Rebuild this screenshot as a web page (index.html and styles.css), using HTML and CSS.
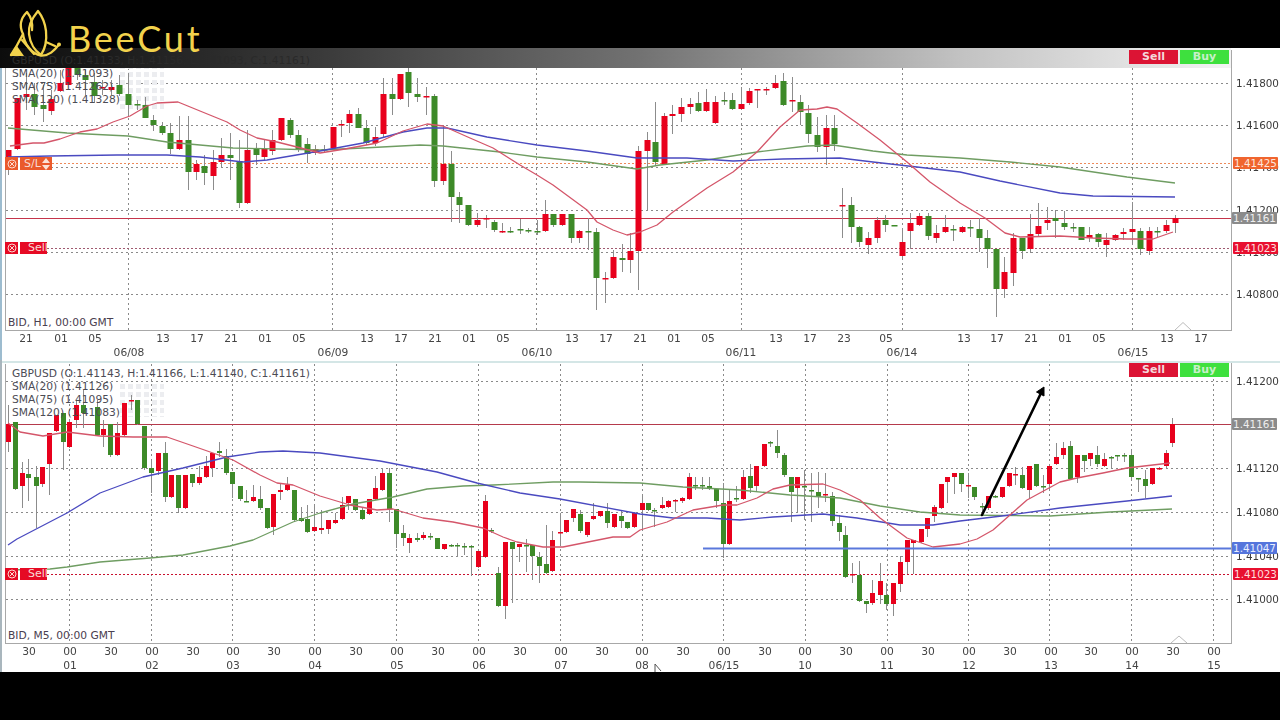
FILE: index.html
```html
<!DOCTYPE html>
<html lang="en">
<head>
<meta charset="utf-8">
<title>BeeCut - GBPUSD charts</title>
<link rel="stylesheet" href="styles.css">
</head>
<body>
<div class="screen">
  <header class="brand">
    <svg class="brand-mark" viewBox="0 0 60 60" width="60" height="60" aria-hidden="true">
      <path d="M11 55 C17 46 20 40 23 34 C19 26 21 18 27 12 C31 17 33 23 32 30"/>
      <path d="M38 11 C33 17 28 25 29 34 C30 43 35 51 41 55 C45 49 47 41 46 31 C45 23 42 16 38 11 Z"/>
      <path d="M23 34 C24 43 31 54 41 55.500 C49 56 54 51 59 44.500"/>
      <path d="M22 40 L34 54 M46 42 L55 46"/>
      <path class="brand-fill" d="M10 56 L17 46 L24 56 Z"/>
      <circle class="brand-dot" cx="59" cy="44.500" r="2"/>
    </svg>
    <span class="brand-name">BeeCut</span>
  </header>

  <section class="panel">
    <svg class="plot" id="plot-top" viewBox="0 48 1280 312" width="1280" height="312">
      <defs>
        <linearGradient id="bar-fade" x1="0" x2="1" y1="0" y2="0">
          <stop offset="0" stop-color="#0c0c0c"/>
          <stop offset="0.26" stop-color="#3a3a3a"/>
          <stop offset="0.52" stop-color="#727272"/>
          <stop offset="0.78" stop-color="#c2c2c2"/>
          <stop offset="1" stop-color="#f4f4f4"/>
        </linearGradient>
        <pattern id="mark-dots" width="8" height="8" patternUnits="userSpaceOnUse">
          <rect width="5" height="5" fill="#ecedf0"/>
        </pattern>
      </defs>
      <g class="layer-grid" data-h="83.5 125.5 167.500 210.500 252.500 294.500" data-v="128.500 332.500 536.500 741.500 902.500 1132.500" data-y1="68" data-y2="330"></g>
      <rect x="118" y="68" width="46" height="42" fill="url(#mark-dots)"/>
      <line class="level level-sl" x1="52" x2="1231" y1="163.500" y2="163.500"/>
      <line class="level level-sell-soft" x1="47" x2="1231" y1="248.500" y2="248.500"/>
      <line class="level level-last-solid" x1="6" x2="1231" y1="218.500" y2="218.500"/>
      <g class="layer-candles"></g>
      <g class="layer-lines"></g>
      <rect class="bar" x="0" y="48" width="1231" height="20" fill="url(#bar-fade)"/>
      <path class="frame-line" d="M5.500 68 V330.500 H1231.500 V50"/>
      <path class="pointer-mark" d="M1175 330 L1183 322.500 L1191 330"/>
      <g class="price-axis">
        <text x="1236" y="87">1.41800</text>
        <text x="1236" y="129">1.41600</text>
        <text x="1236" y="171">1.41400</text>
        <text x="1236" y="214">1.41200</text>
        <text x="1236" y="256">1.41000</text>
        <text x="1236" y="298">1.40800</text>
      </g>
      <g class="time-axis">
        <text x="26" y="342">21</text><text x="61" y="342">01</text><text x="95" y="342">05</text>
        <text x="163" y="342">13</text><text x="197" y="342">17</text><text x="231" y="342">21</text><text x="265" y="342">01</text><text x="299" y="342">05</text>
        <text x="367" y="342">13</text><text x="401" y="342">17</text><text x="435" y="342">21</text><text x="469" y="342">01</text><text x="503" y="342">05</text>
        <text x="572" y="342">13</text><text x="606" y="342">17</text><text x="640" y="342">21</text><text x="674" y="342">01</text><text x="708" y="342">05</text>
        <text x="776" y="342">13</text><text x="810" y="342">17</text><text x="844" y="342">23</text><text x="886" y="342">05</text>
        <text x="964" y="342">13</text><text x="997" y="342">17</text><text x="1031" y="342">21</text><text x="1065" y="342">01</text><text x="1099" y="342">05</text>
        <text x="1167" y="342">13</text><text x="1201" y="342">17</text>
        <text x="129" y="356">06/08</text><text x="333" y="356">06/09</text><text x="537" y="356">06/10</text><text x="741" y="356">06/11</text><text x="902" y="356">06/14</text><text x="1133" y="356">06/15</text>
      </g>
    </svg>
    <div class="legend legend-top">
      <div class="legend-pair">GBPUSD (O:1.41133, H:1.41156, L:1.41093, C:1.41161)</div>
      <div>SMA(20) (1.41093)</div>
      <div>SMA(75) (1.41262)</div>
      <div>SMA(120) (1.41328)</div>
    </div>
    <div class="trade trade-top"><span class="btn btn-sell">Sell</span><span class="btn btn-buy">Buy</span></div>
    <div class="mode mode-top">BID, H1, 00:00 GMT</div>
    <div class="order order-sl"><span class="order-x"><svg viewBox="0 0 10 10" width="10" height="10"><circle cx="5" cy="5" r="4"/><path d="M3 3 L7 7 M7 3 L3 7"/></svg></span><span class="order-name">S/L<svg class="updown" viewBox="0 0 8 12" width="8" height="12"><path d="M4 0 L8 5 H0 Z M4 12 L0 7 H8 Z"/></svg></span></div>
    <div class="order order-sell order-sell-top"><span class="order-x"><svg viewBox="0 0 10 10" width="10" height="10"><circle cx="5" cy="5" r="4"/><path d="M3 3 L7 7 M7 3 L3 7"/></svg></span><span class="order-name">Sell</span></div>
    <div class="tag tag-sl t-a">1.41425</div>
    <div class="tag tag-last t-b">1.41161</div>
    <div class="tag tag-sell t-c">1.41023</div>
  </section>

  <section class="panel panel-lower">
    <svg class="plot" id="plot-bottom" viewBox="0 360 1280 312" width="1280" height="312">
      <g class="layer-grid" data-h="381.500 468.500 512.500 556.500 599.500" data-v="69.500 151.500 232.500 314.500 396.500 478.500 560.500 642.500 723.500 805.500 887.500 968.500 1049.500 1131.500 1213.500" data-y1="364" data-y2="643"></g>
      <rect x="118" y="381" width="46" height="36" fill="url(#mark-dots)"/>
      <line class="level level-sell" x1="47" x2="1231" y1="574.500" y2="574.500"/>
      <line class="level level-last" x1="6" x2="1231" y1="424.500" y2="424.500"/>
      <g class="layer-candles"></g>
      <g class="layer-lines"></g>
      <line class="level-blue" x1="703" x2="1231" y1="548.500" y2="548.500"/>
      <path class="trend-arrow" d="M982 515 L1042 391"/>
      <path class="trend-head" d="M1044 387 L1036.500 392 L1044 396 Z"/>
      <path class="frame-line" d="M5.500 364 V643.500 H1231.500 V363"/>
      <path class="pointer-mark" d="M1171 643 L1179 636 L1187 643"/>
      <g class="price-axis">
        <text x="1236" y="385">1.41200</text>
        <text x="1236" y="472">1.41120</text>
        <text x="1236" y="516">1.41080</text>
        <text x="1236" y="560">1.41040</text>
        <text x="1236" y="603">1.41000</text>
      </g>
      <g class="time-axis">
        <text x="29" y="655">30</text><text x="70" y="655">00</text><text x="111" y="655">30</text><text x="152" y="655">00</text><text x="193" y="655">30</text><text x="233" y="655">00</text><text x="274" y="655">30</text><text x="315" y="655">00</text><text x="356" y="655">30</text><text x="397" y="655">00</text><text x="438" y="655">30</text><text x="479" y="655">00</text><text x="520" y="655">30</text><text x="561" y="655">00</text><text x="602" y="655">30</text><text x="642" y="655">00</text><text x="683" y="655">30</text><text x="724" y="655">00</text><text x="765" y="655">30</text><text x="805" y="655">00</text><text x="846" y="655">30</text><text x="887" y="655">00</text><text x="928" y="655">30</text><text x="969" y="655">00</text><text x="1010" y="655">30</text><text x="1051" y="655">00</text><text x="1091" y="655">30</text><text x="1132" y="655">00</text><text x="1173" y="655">30</text><text x="1214" y="655">00</text>
        <text x="70" y="669">01</text><text x="152" y="669">02</text><text x="233" y="669">03</text><text x="315" y="669">04</text><text x="397" y="669">05</text><text x="479" y="669">06</text><text x="561" y="669">07</text><text x="642" y="669">08</text><text x="724" y="669">06/15</text><text x="805" y="669">10</text><text x="887" y="669">11</text><text x="969" y="669">12</text><text x="1051" y="669">13</text><text x="1132" y="669">14</text><text x="1214" y="669">15</text>
      </g>
      <path class="cursor" d="M655 664 V672 M655 664 L661 671"/>
    </svg>
    <div class="legend legend-bottom">
      <div>GBPUSD (O:1.41143, H:1.41166, L:1.41140, C:1.41161)</div>
      <div>SMA(20) (1.41126)</div>
      <div>SMA(75) (1.41095)</div>
      <div>SMA(120) (1.41083)</div>
    </div>
    <div class="trade trade-bottom"><span class="btn btn-sell">Sell</span><span class="btn btn-buy">Buy</span></div>
    <div class="mode mode-bottom">BID, M5, 00:00 GMT</div>
    <div class="order order-sell order-sell-bottom"><span class="order-x"><svg viewBox="0 0 10 10" width="10" height="10"><circle cx="5" cy="5" r="4"/><path d="M3 3 L7 7 M7 3 L3 7"/></svg></span><span class="order-name">Sell</span></div>
    <div class="tag tag-last t-d">1.41161</div>
    <div class="tag tag-blue t-e">1.41047</div>
    <div class="tag tag-sell t-f">1.41023</div>
  </section>
</div>
<script src="chart.js"></script>
</body>
</html>
```

FILE: styles.css
```css
* { box-sizing: border-box; }
html, body { margin: 0; padding: 0; background: #000; }
body { width: 1280px; height: 720px; overflow: hidden; }

.screen { display: flex; flex-direction: column; width: 1280px; height: 720px; background: #000; position: relative; }

.brand { height: 48px; flex: none; display: flex; align-items: flex-start; position: relative; z-index: 5; }
.brand-mark { flex: none; fill: none; stroke: #f2d24c; stroke-width: 2.3; stroke-linecap: round; stroke-linejoin: round; overflow: visible; }
.brand-dot, .brand-fill { fill: #f2d24c; stroke: none; }
.brand-name { margin: 15px 0 0 8px; font: 400 36px/46px Lato, "Open Sans", sans-serif; letter-spacing: 2.8px; color: #f2d24c; }

.panel { height: 312px; flex: none; position: relative; background: #fff; }
.panel::before { content: ""; position: absolute; left: 0; top: 20px; bottom: 0; width: 2px; background: #9dbccf; z-index: 2; }
.panel-lower::before { top: 0; background: #a9b6bd; }
.panel-lower::after { content: ""; position: absolute; left: 0; right: 0; top: 1px; height: 2px; background: #d4e6e6; }

.plot { display: block; filter: blur(0.4px); }

.grid-line { stroke: #8a8a8a; stroke-width: 1; stroke-dasharray: 2 3; shape-rendering: crispEdges; }
.frame-line { fill: none; stroke: #a8a8a8; stroke-width: 1; shape-rendering: crispEdges; }
.bar { stroke: none; }
.level { stroke-width: 1; shape-rendering: crispEdges; }
.level-sl { stroke: #ee8a5a; stroke-dasharray: 2 2; }
.level-sell { stroke: #c8102e; stroke-dasharray: 2 2; }
.level-sell-soft { stroke: #a05a70; stroke-dasharray: 2 2; }
.level-last { stroke: #b53a4c; }
.level-last-solid { stroke: #c5344a; }
.level-blue { stroke: #5a78dc; stroke-width: 2; }
.trend-arrow { fill: none; stroke: #000; stroke-width: 2.6; stroke-linecap: round; }
.trend-head { fill: #000; stroke: #000; stroke-width: 1; }
.pointer-mark { fill: #fff; stroke: #bbb; stroke-width: 1; }
.cursor { fill: none; stroke: #555; stroke-width: 1; }

.wick { stroke: #8c8c8c; stroke-width: 1; shape-rendering: crispEdges; }
.body-r { fill: #e8001c; }
.body-g { fill: #3d8a28; }
.sma { fill: none; stroke-width: 1.3; stroke-linejoin: round; }
.sma-20 { stroke: #d4566a; }
.sma-75 { stroke: #4a4ac0; }
.sma-120 { stroke: #6f9d62; }

.price-axis text { font: 10.4px "DejaVu Sans", sans-serif; fill: #3c3c3c; }
.time-axis text { font: 10.7px "DejaVu Sans", sans-serif; fill: #444; text-anchor: middle; }

.legend { position: absolute; left: 12px; font: 10.7px/13px "DejaVu Sans", sans-serif; color: #4c4c55; white-space: nowrap; z-index: 3; }
.legend-top { top: 6px; }
.legend-pair { color: #2a2a2a; }
.legend-bottom { top: 7px; }

.trade { position: absolute; left: 1129px; display: flex; gap: 2px; z-index: 3; }
.trade-top { top: 2px; }
.trade-bottom { top: 3px; }
.btn { width: 49px; height: 14px; font: bold 11px/14px "DejaVu Sans", sans-serif; text-align: center; }
.btn-sell { background: #dc1434; color: #f4d8dc; }
.btn-buy { background: #3ee03e; color: #c8f0c8; }

.mode { position: absolute; left: 8px; font: 10.7px/13px "DejaVu Sans", sans-serif; color: #4a4050; white-space: nowrap; }
.mode-top { top: 268px; }
.mode-bottom { top: 269px; }

.order { position: absolute; left: 5px; display: flex; gap: 2px; height: 12px; z-index: 3; color: #f7dcd6; font: 11px/12px "DejaVu Sans", sans-serif; }
.order-x { width: 13px; display: flex; align-items: center; justify-content: center; }
.order-x svg { fill: none; stroke: #fbd9d0; stroke-width: 1; }
.order-name { display: flex; align-items: center; gap: 1px; padding-left: 8px; }
.updown { fill: #fbe2d6; }
.order-sl { top: 109px; height: 13px; }
.order-sl .order-x, .order-sl .order-name { background: #ea5a2c; }
.order-sl .order-name { width: 32px; padding-left: 4px; }
.order-sell .order-x, .order-sell .order-name { background: #e60a24; }
.order-sell .order-name { width: 27px; }
.order-sell-top { top: 194px; }
.order-sell-bottom { top: 208px; }

.tag { position: absolute; left: 1233px; width: 45px; height: 12px; font: 10.4px/12px "DejaVu Sans", sans-serif; text-align: center; color: #fff; z-index: 3; border-radius: 1px; }
.tag-sl { background: #f0652f; color: #fde6dc; }
.tag-last { background: #8b8b8b; color: #eee; left: 1232px; }
.tag-sell { background: #e8102f; color: #fdd; }
.tag-blue { background: #5575dc; color: #e8eeff; left: 1232px; }
.t-a { top: 109px; }
.t-b { top: 164px; }
.t-c { top: 194px; }
.t-d { top: 58px; }
.t-e { top: 182px; }
.t-f { top: 208px; }
```

FILE: chart.js
```js
var NS = "http://www.w3.org/2000/svg";

var TOP = {
  candles: "r8,150,150,163,175 r17,98,98,149,150 r26,73,94,97,110 g34,83,94,107,115 g43,85,105,109,122 r51,90,99,111,115 r60,70,83,91,92 r68,60,68,85,85 g77,60,60,75,80 g85,70,75,80,95 g94,73,82,96,103 r102,80,87,88,95 r111,80,87,90,95 g119,75,85,94,96 g128,73,94,105,116 g137,100,104,105,110 g145,97,105,118,118 g153,115,120,125,131 g162,122,126,133,135 g170,123,133,149,154 r179,116,140,149,150 g188,116,140,172,190 r196,160,164,172,180 g204,155,166,173,185 r213,150,162,176,190 r221,138,155,162,167 g230,133,155,158,180 g239,140,161,203,208 r247,130,150,203,204 g256,143,149,155,165 r264,140,149,157,160 r272,130,140,151,155 r281,118,118,140,141 g290,118,120,135,138 g298,130,135,149,152 g307,138,144,154,163 r315,145,149,153,155 g324,145,149,150,152 r333,127,127,148,149 r341,120,124,125,137 r349,110,114,123,133 g358,108,114,128,128 g366,120,128,143,145 r375,127,137,143,146 r383,78,94,134,138 g392,78,94,99,115 r400,74,74,99,100 g408,67,72,93,107 g417,78,94,97,102 r426,87,96,97,115 g434,94,96,181,187 r443,125,164,181,185 g451,151,164,197,222 g459,192,197,205,223 g468,205,205,225,226 r477,213,220,225,227 r486,215,218,219,228 g494,220,222,230,232 r502,223,231,232,233 g510,227,231,232,233 g520,219,229,230,234 g528,228,230,231,233 g537,220,231,232,235 r545,200,214,231,232 g553,214,214,225,227 r562,214,214,225,226 g571,214,214,238,243 r579,230,231,238,243 g588,218,231,232,250 g596,228,232,278,310 r605,272,278,279,303 r613,250,257,278,279 g622,244,258,260,272 r630,233,251,260,273 r638,146,151,251,290 r647,132,140,151,210 g655,102,142,162,165 r664,113,116,164,165 r672,105,114,116,134 r681,98,107,114,122 r690,98,104,107,114 g698,92,103,111,112 r706,89,102,111,112 r715,96,102,123,124 g724,92,100,101,105 g732,93,100,109,110 r741,87,104,109,110 r749,88,91,103,105 r757,89,89,90,108 r766,87,89,90,95 r775,75,83,88,89 g783,73,81,105,106 r792,77,100,101,112 g800,95,102,112,125 g808,105,113,134,143 g817,117,135,147,152 r826,115,128,147,165 g834,115,128,144,151 r842,188,205,206,238 g851,197,205,227,243 g859,226,227,242,247 r868,232,238,245,254 r877,217,220,238,243 g885,215,220,225,232 g894,225,225,226,226 r902,228,242,256,258 r910,213,223,231,249 r919,213,216,225,226 g928,213,216,236,240 r936,225,233,238,243 r945,215,227,232,233 g953,225,229,230,241 r962,226,227,232,233 g970,220,227,228,237 g979,218,229,238,252 g987,230,238,249,268 g996,249,249,289,317 r1004,257,272,289,298 r1013,233,238,273,286 g1022,238,238,251,259 r1030,214,234,249,253 r1038,203,226,234,236 r1047,207,220,223,230 g1055,210,218,221,238 g1064,211,223,227,230 g1073,223,227,228,232 g1081,227,227,240,240 r1089,227,235,238,242 g1098,233,234,242,247 r1106,233,240,245,257 r1115,234,235,240,241 r1123,228,232,234,240 r1132,202,229,232,245 g1140,228,231,249,255 r1149,227,231,251,255 g1157,227,231,232,237 r1166,220,225,231,233 r1175,215,218,223,233",
  width: 6,
  lines: {
    "sma-120": "8,128 67,133 128,136 167,142 200,145 233,148 320,150 363,148 420,145 443,146 500,152 537,157 587,162 637,169 660,165 707,160 757,152 807,146 833,145 873,151 907,155 960,158 1010,162 1060,167 1127,177 1175,183",
    "sma-75": "8,157 50,156 117,155 167,155 200,157 243,162 267,160 320,151 363,143 403,132 427,128 447,128 487,137 537,145 587,151 637,158 687,158 733,161 783,159 840,158 873,162 917,167 960,172 1000,181 1060,193 1093,196 1175,197",
    "sma-20": "10,146 33,143 44,143 60,139 80,132 97,129 113,122 130,116 147,106 157,103 178,102 200,111 227,122 240,130 257,138 277,142 297,147 320,153 345,149 377,143 403,131 427,124 443,126 470,138 493,148 520,165 537,175 553,185 587,210 597,222 613,230 627,235 640,232 657,225 673,212 707,188 733,172 757,152 780,127 800,110 817,109 827,107 837,109 857,123 880,140 907,162 930,182 960,203 985,218 1005,233 1020,237 1060,236 1077,237 1093,238 1127,239 1153,239 1173,232"
  }
};

var BOTTOM = {
  candles: "r8,405,424,442,452 g15,422,422,489,490 r22,462,473,486,508 g28,459,474,478,501 g36,466,477,486,528 r42,467,467,484,487 r49,433,433,464,495 r56,415,415,431,432 g63,413,413,442,470 r69,420,422,447,448 r76,400,405,420,428 g83,390,405,413,428 g97,400,407,435,436 r103,420,429,435,447 g110,424,424,455,457 r117,422,433,455,456 r124,403,403,435,436 r131,395,400,401,410 g137,400,400,424,425 g144,426,426,468,470 g151,460,468,473,493 r158,453,453,471,475 g165,442,453,497,502 r171,475,475,497,498 g178,475,475,508,513 r185,475,475,508,509 g192,474,474,483,487 r199,466,477,483,485 r206,456,466,477,478 r212,453,453,468,477 g219,442,451,453,457 g226,449,456,473,475 g232,472,472,484,498 g240,486,486,499,501 g246,490,501,502,502 r253,485,497,501,502 g260,486,499,508,510 g267,508,508,528,529 r273,494,494,527,535 r280,483,490,492,500 r287,477,485,490,491 g294,490,490,520,522 g301,507,518,521,522 g307,505,519,532,533 r314,505,527,531,532 r321,510,528,530,534 r328,520,520,529,534 r335,513,520,523,524 r342,497,505,519,520 r348,496,496,503,510 g355,499,499,510,511 g362,508,510,519,520 r369,499,499,514,515 r375,476,488,499,500 r382,468,473,490,491 g389,468,473,509,522 g396,509,509,534,548 g403,525,533,538,546 r409,534,538,543,553 g417,533,538,540,542 r423,532,535,538,540 g430,533,536,537,540 g437,538,538,549,549 r444,544,544,549,550 g451,544,545,546,547 g457,543,545,546,556 g464,543,546,547,555 g471,545,546,547,576 r478,551,551,567,568 r485,495,501,557,558 g491,528,530,531,533 g498,567,573,606,607 r505,542,542,606,619 g512,542,542,549,603 r519,544,544,547,562 g526,539,545,546,572 g532,545,545,556,580 g539,552,557,566,583 g546,525,564,573,574 r552,531,540,571,572 r560,513,532,533,545 r566,520,520,532,533 r573,509,509,518,522 g580,510,514,531,533 r587,522,522,535,537 r593,503,516,519,520 r600,511,511,516,517 g607,503,511,523,528 r614,514,514,527,528 g621,510,516,521,528 g627,522,522,528,529 r634,512,513,527,528 r642,495,503,510,530 g648,503,503,510,511 g654,508,510,511,527 r662,497,505,508,509 r668,500,501,507,508 r675,499,500,501,512 r682,497,498,501,503 r689,473,477,499,500 g695,477,485,486,490 g702,477,485,486,490 g709,477,486,488,490 g716,489,489,501,508 g723,483,503,544,558 r729,490,501,544,545 g736,486,498,499,502 r743,470,477,499,500 g750,464,476,488,493 r756,466,466,486,492 r764,444,444,466,467 g770,441,442,443,447 g777,430,446,453,458 g784,453,455,475,477 g791,477,477,492,522 r797,477,477,488,513 g804,470,486,487,520 g811,473,490,491,522 g818,472,492,497,508 r825,473,494,495,502 g832,492,496,521,526 g839,515,523,532,541 g845,526,535,577,578 r852,563,574,575,583 g859,561,575,601,602 g866,601,601,604,613 r872,580,593,603,605 r880,563,581,595,604 g886,583,595,604,610 r893,583,583,604,616 r900,556,562,584,592 r907,540,540,562,574 r913,540,540,543,574 r921,529,529,542,543 r927,518,518,529,537 r934,505,507,516,522 r941,484,484,508,509 r947,477,477,482,503 r954,473,473,477,494 g961,473,473,484,492 r968,473,485,486,498 g974,487,487,497,500 g982,503,506,507,515 r988,496,496,508,510 g995,495,496,497,498 r1002,487,487,497,498 r1009,473,473,486,487 r1015,467,474,475,485 g1022,467,475,488,489 r1029,466,466,490,499 g1036,464,464,486,487 g1043,475,486,487,493 r1049,466,466,484,489 r1056,443,457,464,465 r1063,442,448,455,459 g1070,441,446,479,480 r1077,455,455,477,483 g1084,455,455,461,472 r1090,453,453,459,466 g1097,446,455,464,467 r1104,453,459,466,467 g1111,456,457,458,468 g1117,455,455,456,461 g1124,453,455,456,462 g1131,450,455,477,481 g1138,478,478,479,492 g1145,470,479,486,498 r1152,468,468,484,485 r1159,467,468,469,470 r1166,450,453,466,468 r1172,418,424,443,447",
  width: 5,
  lines: {
    "sma-120": "8,570 50,569 67,567 100,562 150,558 183,555 230,546 253,540 293,522 320,513 353,504 393,497 427,489 463,486 493,485 553,482 580,482 640,483 683,487 740,490 790,495 840,498 880,506 920,512 960,515 1050,516 1110,512 1172,509",
    "sma-75": "8,545 17,539 67,513 100,493 143,477 183,468 227,457 260,452 283,451 320,453 380,461 437,472 477,483 520,493 560,499 640,514 673,518 707,518 740,520 773,517 823,514 857,518 900,525 933,525 960,521 1010,515 1060,508 1127,501 1172,496",
    "sma-20": "8,423 20,432 43,436 67,432 100,436 133,437 167,437 193,446 233,460 260,475 277,483 293,485 320,496 350,505 377,510 393,509 423,518 453,522 483,528 503,537 517,542 543,547 563,547 613,537 630,537 640,530 667,522 693,510 723,505 737,505 757,498 773,489 790,485 823,484 840,490 860,500 880,518 907,538 933,547 960,544 977,539 993,530 1010,515 1027,500 1060,482 1077,478 1103,473 1127,468 1170,463"
  }
};

function el(name, attrs, parent) {
  var node = document.createElementNS(NS, name);
  Object.keys(attrs).forEach(function (k) { node.setAttribute(k, attrs[k]); });
  parent.appendChild(node);
  return node;
}

function drawGrid(svg) {
  var g = svg.querySelector(".layer-grid");
  var y1 = g.dataset.y1, y2 = g.dataset.y2;
  g.dataset.h.split(" ").forEach(function (y) {
    el("line", { "class": "grid-line", x1: 6, x2: 1231, y1: y, y2: y }, g);
  });
  g.dataset.v.split(" ").forEach(function (x) {
    el("line", { "class": "grid-line", x1: x, x2: x, y1: y1, y2: y2 }, g);
  });
}

function drawCandles(svg, data) {
  var g = svg.querySelector(".layer-candles");
  data.candles.split(" ").forEach(function (item) {
    var kind = item.charAt(0);
    var v = item.slice(1).split(",").map(Number);
    var x = v[0];
    el("line", { "class": "wick", x1: x + 0.5, x2: x + 0.5, y1: v[1], y2: v[4] }, g);
    el("rect", {
      "class": "body-" + kind,
      x: x - (data.width - 1) / 2,
      y: v[2],
      width: data.width,
      height: Math.max(v[3] - v[2], 1.5)
    }, g);
  });
}

function drawLines(svg, data) {
  var g = svg.querySelector(".layer-lines");
  Object.keys(data.lines).forEach(function (name) {
    el("polyline", { "class": "sma " + name, points: data.lines[name] }, g);
  });
}

[["plot-top", TOP], ["plot-bottom", BOTTOM]].forEach(function (pair) {
  var svg = document.getElementById(pair[0]);
  drawGrid(svg);
  drawCandles(svg, pair[1]);
  drawLines(svg, pair[1]);
});
```
